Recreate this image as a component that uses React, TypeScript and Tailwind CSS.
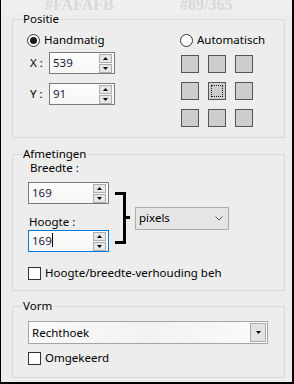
import React from "react";

function Triangle({ up }: { up: boolean }) {
    return (
        <svg width="5" height="3" viewBox="0 0 5 3">
            <polygon points={up ? "2.5,0 5,3 0,3" : "0,0 5,0 2.5,3"} fill="#000" />
        </svg>
    );
}

function SpinInput({ value, width, focused, caret }: { value: string; width: string; focused?: boolean; caret?: boolean }) {
    return (
        <div
            className={`${width} h-[22px] flex items-center border bg-gradient-to-b from-[#fdfdfd] to-[#f6f6f6] ${
                focused ? "border-[#0078d7]" : "border-[#7a7a7a]"
            }`}
        >
            <span className="pl-[3px] flex-1 leading-none text-[#1b1b3a]">
                {value}
                {caret && <span className="inline-block w-px h-[14px] bg-black align-middle -mt-[2px]" />}
            </span>
            <div className="flex flex-col gap-px pr-[2px]">
                <div className="w-[13px] h-[9px] flex items-center justify-center bg-[#e6e6e6] border border-[#adadad]">
                    <Triangle up />
                </div>
                <div className="w-[13px] h-[9px] flex items-center justify-center bg-[#e6e6e6] border border-[#adadad]">
                    <Triangle up={false} />
                </div>
            </div>
        </div>
    );
}

function Radio({ label, checked }: { label: string; checked?: boolean }) {
    return (
        <div className="h-[16px] flex items-center gap-[4px]">
            <span className="w-[13px] h-[13px] rounded-full border border-[#333] bg-white flex items-center justify-center">
                {checked && <span className="w-[7px] h-[7px] rounded-full bg-[#1a1a1a]" />}
            </span>
            <span className="leading-[16px] whitespace-nowrap">{label}</span>
        </div>
    );
}

function Checkbox({ label }: { label: string }) {
    return (
        <div className="h-[16px] flex items-center gap-[4px] whitespace-nowrap">
            <span className="w-[13px] h-[13px] shrink-0 border border-[#333] bg-white" />
            <span className="leading-[16px]">{label}</span>
        </div>
    );
}

function Group({ label, className, children }: { label: string; className: string; children: React.ReactNode }) {
    return (
        <div className={`relative ml-[11px] w-[273px] border border-[#d9d9d9] ${className}`}>
            <span className="absolute -top-[8px] left-[9px] px-[1px] leading-[14px] bg-[#ededed]">{label}</span>
            {children}
        </div>
    );
}

export default function App() {
    const cells = [0, 1, 2, 3, 4, 5, 6, 7, 8];
    return (
        <div className="w-[294px] h-[384px] overflow-hidden bg-[#ededed] border-l border-r-2 border-b-2 border-black flex flex-col font-['Noto_Sans',sans-serif] text-[11.5px] text-black">
            <div className="h-[13px] shrink-0 flex overflow-hidden bg-[#efefef] font-['Liberation_Serif',serif] font-bold text-[16px] leading-none text-[#d8d8d8]">
                <span className="ml-[44px] w-[135px] -mt-[3px]">#FAFAFB</span>
                <span className="-mt-[3px]">#89/365</span>
            </div>

            <Group label="Positie" className="mt-[6px] h-[119px]">
                <div className="flex pt-[12px]">
                    <div className="pl-[14px] w-[167px] flex flex-col">
                        <Radio label="Handmatig" checked />
                        <div className="mt-[4px] flex items-center">
                            <span className="ml-[3px] w-[19px]">X :</span>
                            <SpinInput value="539" width="w-[66px]" />
                        </div>
                        <div className="mt-[9px] flex items-center">
                            <span className="ml-[3px] w-[19px]">Y :</span>
                            <SpinInput value="91" width="w-[66px]" />
                        </div>
                    </div>
                    <div className="flex flex-col">
                        <Radio label="Automatisch" />
                        <div className="mt-[7px] ml-px grid grid-cols-[18px_18px_18px] gap-[9px]">
                            {cells.map(i => (
                                <div key={i} className="w-[18px] h-[18px] bg-[#cdcdcd] border border-[#555] p-[2px]">
                                    {i === 4 && <div className="w-full h-full border border-dotted border-[#222]" />}
                                </div>
                            ))}
                        </div>
                    </div>
                </div>
            </Group>

            <Group label="Afmetingen" className="mt-[16px] h-[137px]">
                <div className="pl-[15px] pt-[5px] flex flex-col">
                    <div className="flex">
                        <div className="flex flex-col">
                            <span className="ml-[2px] leading-[16px]">Breedte :</span>
                            <div className="mt-[6px]">
                                <SpinInput value="169" width="w-[81px]" />
                            </div>
                            <span className="mt-[10px] ml-px leading-[16px]">Hoogte :</span>
                            <SpinInput value="169" width="w-[81px]" focused caret />
                        </div>
                        <div className="ml-[6px] mt-[32px] flex items-center self-start">
                            <svg width="15" height="52" viewBox="0 0 15 52">
                                <rect x="0" y="0" width="11" height="3" fill="#000" />
                                <rect x="8" y="0" width="3" height="52" fill="#000" />
                                <rect x="0" y="49" width="11" height="3" fill="#000" />
                                <rect x="11" y="24" width="4" height="3" fill="#000" />
                            </svg>
                            <div className="ml-[5px] w-[94px] h-[23px] flex items-center justify-between bg-[#e5e5e5] border border-[#adadad] pl-[3px] pr-[5px]">
                                <span>pixels</span>
                                <svg width="8" height="5" viewBox="0 0 8 5">
                                    <polyline points="0.5,0.5 4,4 7.5,0.5" fill="none" stroke="#555" strokeWidth="1" />
                                </svg>
                            </div>
                        </div>
                    </div>
                    <div className="mt-[13px] overflow-hidden w-[194px]">
                        <Checkbox label="Hoogte/breedte-verhouding behouden" />
                    </div>
                </div>
            </Group>

            <Group label="Vorm" className="mt-[15px] h-[72px]">
                <div className="pl-[15px] pt-[14px] flex flex-col">
                    <div className="w-[240px] h-[23px] flex items-center justify-between border border-[#a5a5a5] bg-gradient-to-r from-[#fbfbfb] via-[#f2f2f2] to-[#fbfbfb] pl-[3px] pr-px">
                        <span>Rechthoek</span>
                        <div className="w-[16px] h-[19px] flex items-center justify-center bg-[#e3e3e3] border border-[#acacac]">
                            <Triangle up={false} />
                        </div>
                    </div>
                    <div className="mt-[6px]">
                        <Checkbox label="Omgekeerd" />
                    </div>
                </div>
            </Group>
        </div>
    );
}
